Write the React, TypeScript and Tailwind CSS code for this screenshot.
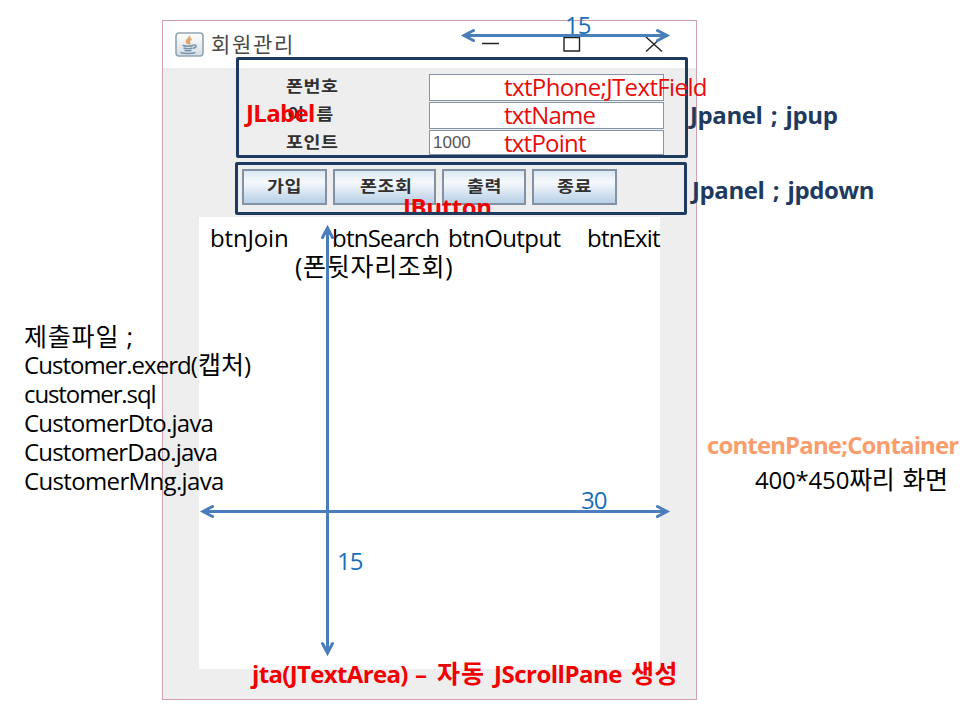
import React from "react";

const NOTE =
  "whitespace-pre text-[24px] leading-[29px] font-['Open_Sans','Noto_Sans_CJK_KR',sans-serif]";
const SWING =
  "inline-block origin-left scale-x-115 whitespace-pre text-[16px] leading-none font-bold tracking-[0.5px] text-[#303030] font-['Noto_Sans_CJK_KR',sans-serif]";

function JavaIcon() {
  return (
    <svg className="h-[25px] w-[29px] shrink-0" viewBox="0 0 29 25" fill="none">
      <defs>
        <linearGradient id="cup" x1="0" y1="0" x2="0" y2="1">
          <stop offset="0" stopColor="#ffffff" />
          <stop offset="1" stopColor="#d5dde3" />
        </linearGradient>
      </defs>
      <rect x="1" y="1" width="27" height="23" rx="3" fill="url(#cup)" stroke="#91a5b2" strokeWidth="1.6" />
      <path d="M14.500 4c1 3-4 3.500-2.700 6 .4.900 1.200 1.300 1.200 2.300M16.500 7c-2.500 1-3.300 2.200-2.200 3.500.6.700 0 1.300-.6 1.700" stroke="#e3a269" strokeWidth="1.900" />
      <path d="M7.500 13.300c2.500 1.200 8.500 1.200 11 0M8.500 16c3 .9 6.500.9 9 0M9.500 18.300c2.500.7 5 .7 7 0M18.500 13c3.500-.5 3.500 2.500-.5 3.300M5.500 20.300c3 1.500 12 1.500 15 0" stroke="#7693aa" strokeWidth="1.500" />
    </svg>
  );
}

function TitleBar() {
  return (
    <header className="flex h-[47px] shrink-0 items-center bg-white pl-3">
      <JavaIcon />
      <h1 className="ml-[7px] flex-1 pb-[2px] text-[21px] leading-none tracking-[1.7px] text-[#484848] font-['Noto_Sans_CJK_KR',sans-serif]">
        회원관리
      </h1>
      <svg className="mr-[33px] mb-[2px] h-[18px] w-[182px]" viewBox="0 0 182 18" fill="none" stroke="#222" strokeWidth="1.400">
        <path d="M1 8.500h17M83 2.500h15.500v13.500H83zM165 2l16 14.500M181 2l-16 14.500" />
      </svg>
    </header>
  );
}

type FieldProps = { label: string; labelClass?: string; boxClass: string; value?: string; name: string; nameClass: string };

function Field({ label, labelClass = "", boxClass, value, name, nameClass }: FieldProps) {
  return (
    <div className="flex h-[28px] items-start">
      <label className="w-[143px] pt-[4px] leading-none">
        <span className={`${SWING} ${labelClass}`}>{label}</span>
      </label>
      <div className={`flex w-[235px] items-center border border-[#8494a5] bg-white text-[#555] ${boxClass}`}>
        <span className="w-[74px] shrink-0 pl-[3px] text-[17px] leading-none font-['Liberation_Sans',sans-serif]">{value}</span>
        <span className={`${NOTE} text-[#e80c0c] ${nameClass}`}>{name}</span>
      </div>
    </div>
  );
}

function Button({ className, children }: { className: string; children: string }) {
  return (
    <button
      className={`flex h-[36px] items-center justify-center border-2 border-[#8292a4] bg-gradient-to-b from-[#dce8f3] via-[#f6f9fc] via-35% to-[#b8cfe5] pr-[4px] pb-[4px] ${className}`}
    >
      <span className={`${SWING} origin-center`}>{children}</span>
    </button>
  );
}

function AppWindow() {
  return (
    <section className="flex h-[680px] w-[535px] shrink-0 flex-col border border-[#d3a0ae] bg-[#eeeeee]">
      <TitleBar />
      <div className="relative -mt-[11px] ml-[73px] flex h-[101px] w-[452px] shrink-0 flex-col rounded-[2px] border-[3px] border-[#1f3a5f] pt-[13px] pl-[47px]">
        <Field label="폰번호" boxClass="mt-[1px] h-[27px]" name="txtPhone;JTextField" nameClass="pb-[3px] tracking-[-0.62px]" />
        <Field
          label="이 름"
          labelClass="pl-[1px] [word-spacing:6px]"
          boxClass="mt-[1px] h-[27px]"
          name="txtName"
          nameClass="pb-[3px] tracking-[-0.8px]"
        />
        <Field label="포인트" boxClass="mt-[1px] h-[25px]" value="1000" name="txtPoint" nameClass="tracking-[-0.75px]" />
        <div className={`absolute top-[38px] left-[7px] font-bold tracking-[-0.65px] text-[#f00000] ${NOTE}`}>JLabel</div>
      </div>
      <div className="relative mt-[4px] ml-[72px] flex h-[53px] w-[452px] shrink-0 gap-[6px] overflow-hidden rounded-[2px] border-[3px] border-[#1f3a5f] pt-[4px] pl-[4px]">
        <Button className="w-[85px]">가입</Button>
        <Button className="w-[103px]">폰조회</Button>
        <Button className="w-[84px]">출력</Button>
        <Button className="w-[85px]">종료</Button>
        <div className={`absolute top-[27px] left-[165px] font-bold tracking-[-0.4px] text-[#f00000] ${NOTE}`}>JButton</div>
      </div>
      <div className={`mt-[2px] ml-[36px] h-[452px] w-[461px] shrink-0 bg-white pt-[6px] text-black ${NOTE}`}>
        <div className="grid grid-cols-[122px_116px_139px_80px] pl-[11px]">
          <span className="tracking-[-0.15px]">btnJoin</span>
          <span className="tracking-[-0.75px]">btnSearch</span>
          <span className="tracking-[-0.6px]">btnOutput</span>
          <span className="tracking-[-0.8px]">btnExit</span>
        </div>
        <p className="pl-[96px] text-[25px] leading-[28px] tracking-[0.7px]">(폰뒷자리조회)</p>
      </div>
      <p className={`-mt-[10px] flex pl-[89px] font-bold text-[#f00000] ${NOTE}`}>
        <span className="w-[163px] tracking-[-0.65px]">jta(JTextArea)</span>
        <span className="w-[22px]">–</span>
        <span className="w-[57px] text-[25px] tracking-[1px]">자동</span>
        <span className="w-[137px] tracking-[-0.5px]">JScrollPane</span>
        <span className="text-[25px] tracking-[0.5px]">생성</span>
      </p>
    </section>
  );
}

function FileList() {
  return (
    <aside className={`relative z-10 flex w-[162px] shrink-0 flex-col pt-[302px] pl-[24px] text-black ${NOTE}`}>
      <p className="text-[25px] leading-[28px] tracking-[0.8px]">제출파일 ;</p>
      <p className="tracking-[-0.95px]">
        Customer.exerd<span className="tracking-[0px]">(</span>
        <span className="text-[25px] tracking-[0.1px]">캡처</span>)
      </p>
      <p className="tracking-[-1.1px]">customer.sql</p>
      <p className="tracking-[-0.75px]">CustomerDto.java</p>
      <p className="tracking-[-0.8px]">CustomerDao.java</p>
      <p className="tracking-[-0.65px]">CustomerMng.java</p>
    </aside>
  );
}

function PanelNotes() {
  return (
    <aside className={`relative -ml-[7px] flex flex-1 flex-col pt-[80px] ${NOTE}`}>
      <p className="font-bold tracking-[-0.4px] text-[#1f3a5f] [word-spacing:2.5px]">Jpanel ; jpup</p>
      <p className="mt-[46px] pl-[2px] font-bold tracking-[-0.4px] text-[#1f3a5f] [word-spacing:2.5px]">Jpanel ; jpdown</p>
      <p className="mt-[226px] pl-[17px] font-bold tracking-[-0.87px] text-[#fa9d6c]">contenPane;Container</p>
      <p className="mt-[6px] pl-[65px] tracking-[-0.2px] text-black">
        400*450<span className="text-[25px] tracking-[-0.4px] [word-spacing:2px]">짜리 화면</span>
      </p>
    </aside>
  );
}

function Arrows() {
  return (
    <svg className="absolute inset-0 z-20 h-[720px] w-[960px]" viewBox="0 0 960 720" fill="none" stroke="#4a7ebb" strokeWidth="3">
      <path d="M464 35.500H667M203 511.500H667M327.500 228V653" />
      <path
        strokeLinecap="round"
        d="M473.500 30.500l-9.500 5 9.500 5M657.500 30.500l9.500 5-9.500 5M212.500 506.500l-9.500 5 9.500 5M657.500 506.500l9.500 5-9.500 5M322.500 237.500l5-9.500 5 9.500M322.500 643.500l5 9.500 5-9.500"
      />
    </svg>
  );
}

export default function App() {
  return (
    <main className="relative flex h-[720px] w-[960px] overflow-hidden bg-white pt-[20px]">
      <FileList />
      <AppWindow />
      <PanelNotes />
      <Arrows />
      <span className={`absolute top-[10px] left-[565px] z-20 tracking-[-1px] text-[#1a70b8] ${NOTE}`}>15</span>
      <span className={`absolute top-[485px] left-[581px] z-20 tracking-[-1px] text-[#1a70b8] ${NOTE}`}>30</span>
      <span className={`absolute top-[546px] left-[337px] z-20 tracking-[-1px] text-[#1a70b8] ${NOTE}`}>15</span>
    </main>
  );
}
